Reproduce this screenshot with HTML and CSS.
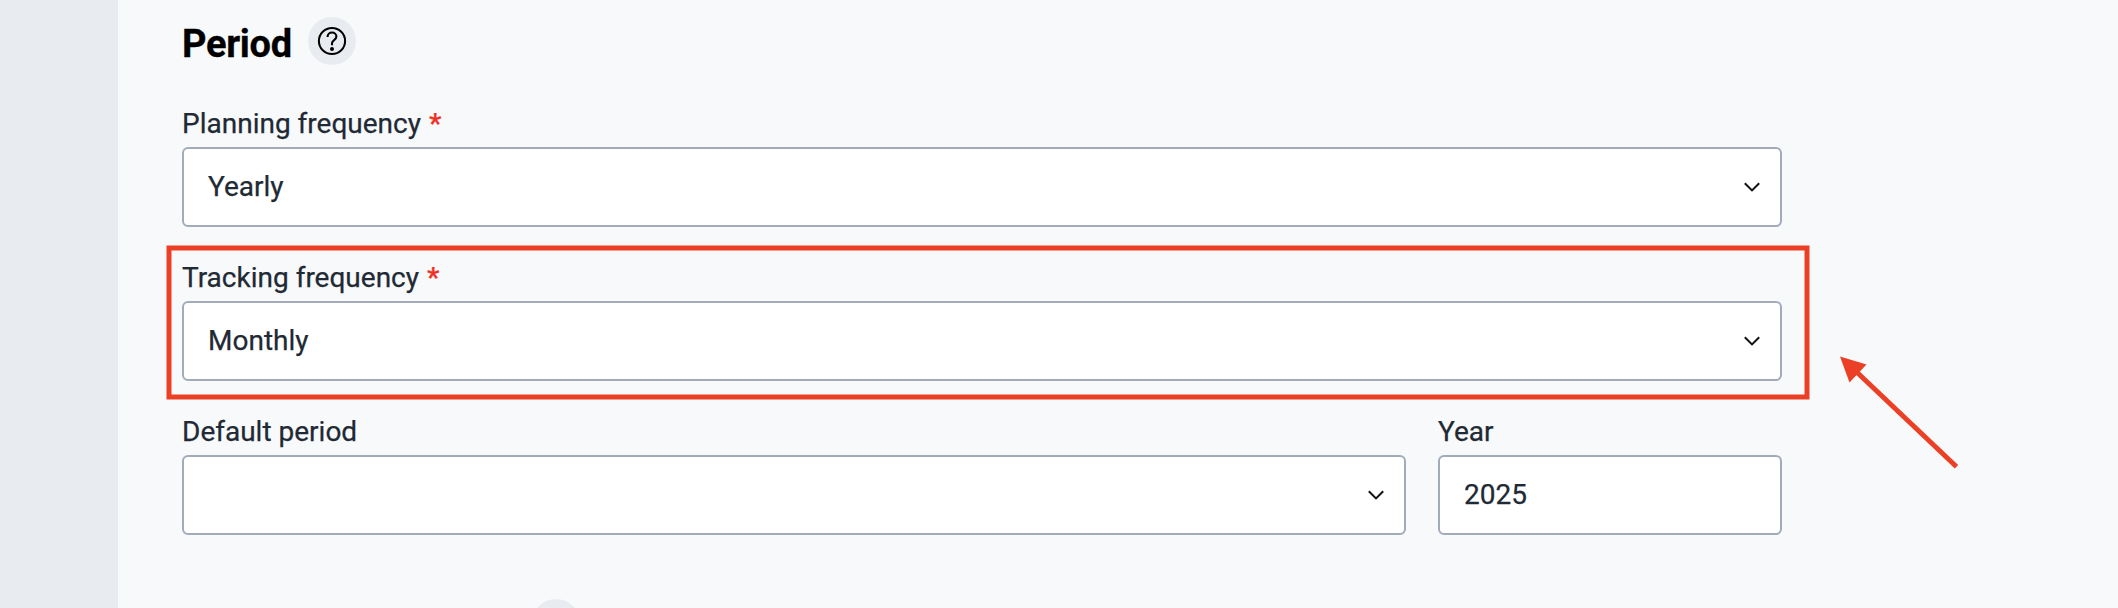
FILE: index.html
```html
<!DOCTYPE html>
<html lang="en">
<head>
<meta charset="utf-8">
<title>Period</title>
<link rel="stylesheet" href="styles.css">
</head>
<body>
<div class="page">
  <aside class="rail"></aside>
  <main class="content">
    <header class="heading">
      <h2 class="title">Period</h2>
      <span class="help">
        <svg width="48" height="48" viewBox="0 0 48 48" fill="none" stroke="#000">
          <circle cx="24" cy="24" r="13.1" stroke-width="2"/>
          <path d="M19.6 20.1v-.5a4.4 4.1 0 0 1 8.8 0c0 3.6-4.4 3.2-4.4 6.5v2.2" stroke-width="2.1"/>
          <circle cx="24" cy="32" r="2" fill="#000" stroke="none"/>
        </svg>
      </span>
    </header>
    <form class="form">
      <div class="field">
        <label class="label">Planning frequency <span class="required">*</span></label>
        <div class="control"><span>Yearly</span>
          <svg class="chevron" width="16" height="10" viewBox="0 0 16 10"><path d="M.8 1.2 8 8.4 15.2 1.2"/></svg>
        </div>
      </div>
      <div class="field">
        <label class="label">Tracking frequency <span class="required">*</span></label>
        <div class="control"><span>Monthly</span>
          <svg class="chevron" width="16" height="10" viewBox="0 0 16 10"><path d="M.8 1.2 8 8.4 15.2 1.2"/></svg>
        </div>
      </div>
      <div class="row">
        <div class="field field-period">
          <label class="label">Default period</label>
          <div class="control"><span></span>
            <svg class="chevron" width="16" height="10" viewBox="0 0 16 10"><path d="M.8 1.2 8 8.4 15.2 1.2"/></svg>
          </div>
        </div>
        <div class="field field-year">
          <label class="label">Year</label>
          <div class="control"><span>2025</span></div>
        </div>
      </div>
    </form>
    <div class="next-heading"><span class="help"></span></div>
  </main>
  <svg class="annotation" width="2118" height="608" viewBox="0 0 2118 608">
    <rect x="169" y="248" width="1638" height="149" fill="none" stroke="#eb4025" stroke-width="5"/>
    <path d="M1854 369.5 1956.5 466.7" stroke="#eb4025" stroke-width="5"/>
    <path d="M1840 356.5 1866.5 364.5 1849.5 382.5z" fill="#eb4025"/>
  </svg>
</div>
</body>
</html>
```
FILE: styles.css
```css
* { box-sizing: border-box; }
body {
  margin: 0;
  font-family: Roboto, sans-serif;
  color: #212934;
  background: #f8f9fb;
}
.page {
  position: relative;
  display: flex;
  height: 608px;
  overflow: hidden;
}
.rail {
  flex: 0 0 118px;
  background: #e8ebf0;
}
.content {
  flex: 1;
  padding: 17px 0 0 64px;
}
.heading {
  display: flex;
  align-items: center;
  gap: 16px;
  height: 48px;
}
.title {
  width: 110px;
  margin: 6px 0 0;
  font-size: 38px;
  line-height: 44px;
  font-weight: 700;
  letter-spacing: -0.3px;
  color: #000;
  -webkit-text-stroke: 0.3px;
}
.help {
  flex: none;
  width: 48px;
  height: 48px;
  border-radius: 50%;
  background: #e8ebf0;
}
.help svg { display: block; }
.form {
  display: flex;
  flex-direction: column;
  gap: 34px;
  width: 1600px;
  margin-top: 42px;
  -webkit-text-stroke: 0.25px;
}
.row {
  display: flex;
  gap: 32px;
}
.field-period { flex: 1; }
.field-year { width: 344px; }
.label {
  display: block;
  height: 32px;
  margin-bottom: 8px;
  font-size: 28px;
  line-height: 34px;
  white-space: nowrap;
}
.required {
  margin-left: 1px;
  font-weight: 500;
  color: #ee3124;
}
.control {
  display: flex;
  align-items: center;
  justify-content: space-between;
  height: 80px;
  padding: 0 20px 0 24px;
  border: 2px solid #a1abba;
  border-radius: 6px;
  background: #fff;
  font-size: 28px;
  line-height: 32px;
}
.chevron {
  fill: none;
  stroke: #111;
  stroke-width: 2;
}
.next-heading {
  margin: 64px 0 0 350px;
  display: flex;
}
.annotation {
  position: absolute;
  inset: 0;
  pointer-events: none;
}
```
